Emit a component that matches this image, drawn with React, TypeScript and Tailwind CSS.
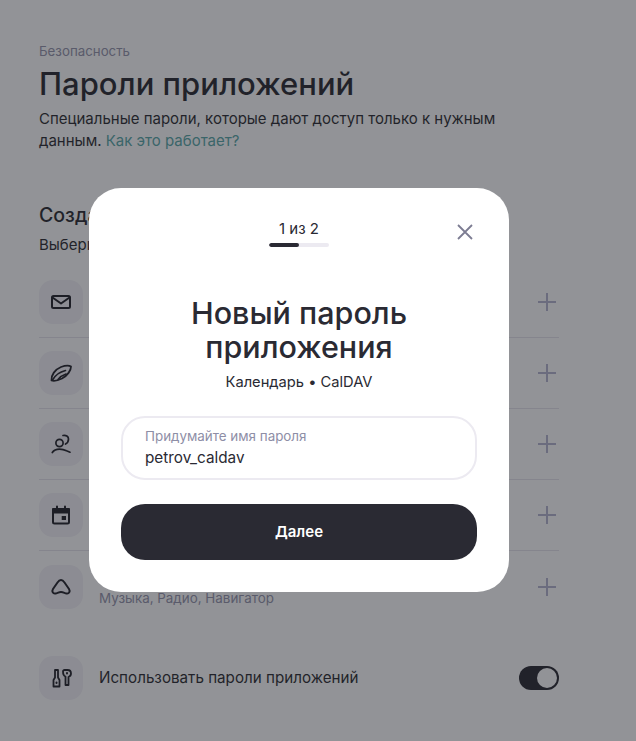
import type { ReactNode } from "react"

const sans = "font-['Inter','Noto_Sans',sans-serif]"

function IconBox({ children }: { children: ReactNode }) {
    return (
        <div className="flex h-11 w-11 shrink-0 items-center justify-center rounded-[14px] bg-[#f2f1f6]">
            <svg width="24" height="24" viewBox="0 0 24 24" fill="none" stroke="#15151d" strokeWidth="2" strokeLinecap="round" strokeLinejoin="round">
                {children}
            </svg>
        </div>
    )
}

const rows: { id: string, sub?: string, icon: ReactNode }[] = [
    {
        id: "mail",
        icon: <>
            <rect x="3" y="6" width="18" height="12" rx="1.5" />
            <path d="M3.500 7.500l8.500 6 8.500-6" />
        </>
    },
    {
        id: "disk",
        icon: <>
            <path d="M2.500 19.500C2 14 6 8.500 12 6c4-1.500 8-1.800 10-.5 0 4-3.500 9-9 12-4 2-8.500 2.700-10.500 2z" strokeWidth="1.800" />
            <path d="M3.500 19c2.500-4.500 7-8 13-9.500M9 18.500c2-2.500 5-4.500 8-5.500" strokeWidth="1.600" />
        </>
    },
    {
        id: "contacts",
        icon: <>
            <circle cx="10.500" cy="11" r="3.600" strokeWidth="1.700" />
            <path d="M3.300 20.500C5 18 8 17.200 10.500 17.200s5 .6 7 1.600l3.500 1.400M14 3.500c3-.8 5.500 1 5.500 3.500 0 2.500-1 4-3 5" strokeWidth="1.700" />
        </>
    },
    {
        id: "calendar",
        icon: <>
            <rect x="4" y="6" width="16" height="14.500" rx="1.500" />
            <path d="M4 6h16v3.500H4zM8 3.500V6M16 3.500V6" fill="#15151d" />
            <rect x="12.700" y="13" width="4.300" height="4" fill="#15151d" stroke="none" />
        </>
    },
    {
        id: "other",
        sub: "Музыка, Радио, Навигатор",
        icon: <path d="M12 5c-1.500 0-2.500 1-3.500 2.500L4 14c-1.500 2.500 0 5 2.500 4.500 2-.5 3.500-1.500 5.500-1.500s3.500 1 5.500 1.500c2.500.5 4-2 2.500-4.500l-4.500-6.500C14.500 6 13.500 5 12 5z" />
    },
]

function Plus() {
    return (
        <svg width="18" height="18" viewBox="0 0 18 18" className="shrink-0 text-[#b0b0cc]" stroke="currentColor" strokeWidth="2">
            <path d="M9 0v18M0 9h18" />
        </svg>
    )
}

export default function App() {
    return (
        <div className={`relative h-[741px] w-[636px] overflow-hidden bg-white ${sans} text-[#1c1c24]`}>
            <div className="ml-[39px] flex w-[520px] flex-col pt-[42px]">
                <div className="text-[13.300px] leading-[18px] text-[#8e8ea6]">Безопасность</div>
                <h1 className="mt-[6px] text-[31px] font-medium leading-[36px]">Пароли приложений</h1>
                <p className="mt-[6px] w-[480px] text-[15px] leading-[22px]">
                    Специальные пароли, которые дают доступ только к нужным данным. <span className="text-[#4fa3a3]">Как это работает?</span>
                </p>
                <h2 className="mt-[50px] text-[19.500px] font-medium leading-[26px]">Создать</h2>
                <div className="mt-[6px] text-[15px] leading-[22px]">Выберите</div>
                <div className="mt-[11px] flex flex-col">
                    {rows.map((row, i) => (
                        <div key={row.id} className={`flex h-[71px] items-center gap-4 ${i < rows.length - 1 ? "border-b border-[#e4e3ea]" : ""}`}>
                            <IconBox>{row.icon}</IconBox>
                            <div className="flex-1 pt-[22px]">
                                {row.sub && <div className="text-[13.400px] leading-[20px] text-[#8e8ea6]">{row.sub}</div>}
                            </div>
                            <div className="pr-[3px]"><Plus /></div>
                        </div>
                    ))}
                </div>
                <div className="mt-[34px] flex h-11 items-center gap-4">
                    <IconBox>
                        <path d="M4.500 20.500h6V14L9 11.500V4H6v7.500L4.500 14z" strokeWidth="1.800" />
                        <path d="M14 5.500C14 4.700 14.700 4 15.500 4h3c2 0 3.500 1.500 3.500 3.500S20.800 10.500 19.500 11v8h-3v-8.500C15 10 14 8 14 5.500z" strokeWidth="1.800" />
                        <path d="M7.500 16.500v.5M18 7v.5" strokeWidth="2" />
                    </IconBox>
                    <div className="flex-1 text-[15.200px] leading-[22px]">Использовать пароли приложений</div>
                    <div className="flex h-6 w-10 justify-end rounded-full bg-[#1c1c24] p-[2px]">
                        <div className="h-5 w-5 rounded-full bg-white" />
                    </div>
                </div>
            </div>

            {/* затемнение и модалка */}
            <div className="absolute inset-0 bg-[#252730]/50 pl-[89px] pt-[188px]">
                <div className="flex h-[404px] w-[420px] flex-col items-center rounded-[32px] bg-white px-8">
                    <div className="relative flex w-full flex-col items-center pt-[31px]">
                        <div className="text-[15px] leading-[20px] text-[#2a2a33]">1 из 2</div>
                        <div className="mt-[4px] h-[4px] w-[60px] overflow-hidden rounded-full bg-[#eceaf1]">
                            <div className="h-full w-[30px] rounded-full bg-[#2a2a33]" />
                        </div>
                        <svg width="18" height="18" viewBox="0 0 18 18" className="absolute right-[3px] top-[35px]" stroke="#7c7c92" strokeWidth="1.800">
                            <path d="M2 2l14 14M16 2L2 16" />
                        </svg>
                    </div>
                    <h3 className="mt-[49px] text-center text-[30.500px] font-medium leading-[34px] text-[#2a2a33]">Новый пароль<br />приложения</h3>
                    <div className="mt-[8px] text-[14.700px] leading-[20px] text-[#2a2a33]">Календарь • CalDAV</div>
                    <div className="mt-[24px] h-[64px] w-[356px] rounded-[24px] border-2 border-[#eceaf1] px-[22px] pt-[9px]">
                        <div className="text-[13.400px] leading-[18px] text-[#8e8ea6]">Придумайте имя пароля</div>
                        <div className="mt-[2px] text-[15.300px] leading-[22px] text-[#2a2a33]">petrov_caldav</div>
                    </div>
                    <button className="mt-[24px] h-[56px] w-[356px] rounded-[24px] bg-[#2a2a33] text-[15px] font-semibold text-white">Далее</button>
                </div>
            </div>
        </div>
    )
}
